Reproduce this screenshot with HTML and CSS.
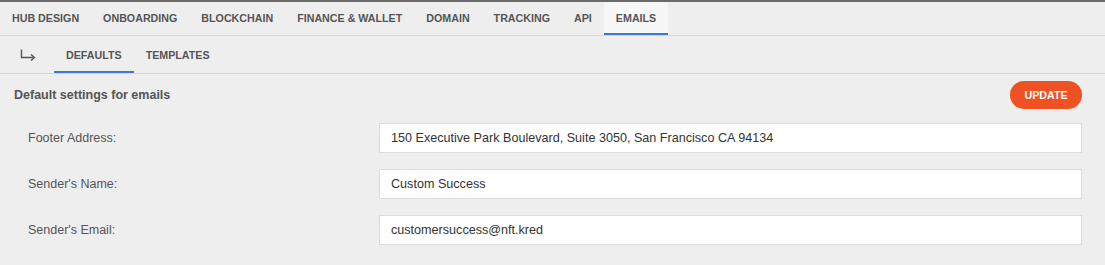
FILE: index.html
```html
<!DOCTYPE html>
<html lang="en">
<head>
  <meta charset="UTF-8" />
  <title>Emails - Defaults</title>
  <link rel="stylesheet" href="styles.css">
</head>
<body>

  <nav class="tabs">
    <a href="#">Hub Design</a>
    <a href="#">Onboarding</a>
    <a href="#">Blockchain</a>
    <a href="#">Finance &amp; Wallet</a>
    <a href="#">Domain</a>
    <a href="#">Tracking</a>
    <a href="#">API</a>
    <a href="#" class="active">Emails</a>
  </nav>

  <nav class="subtabs">
    <span class="sub-icon">
      <svg width="16" height="12" viewBox="0 0 16 12">
        <path d="M1.5 0.5V8.5H13" fill="none" stroke="#555" stroke-width="1.4"/>
        <path d="M11 5.5L14.5 8.5L11 11.5" fill="none" stroke="#555" stroke-width="1.4"/>
      </svg>
    </span>
    <a href="#" class="active">Defaults</a>
    <a href="#">Templates</a>
  </nav>

  <main>
    <div class="section-head">
      <h2>Default settings for emails</h2>
      <button>Update</button>
    </div>

    <div class="form-row">
      <label for="footerAddress">Footer Address:</label>
      <input id="footerAddress" type="text" value="150 Executive Park Boulevard, Suite 3050, San Francisco CA 94134">
    </div>
    <div class="form-row">
      <label for="senderName">Sender's Name:</label>
      <input id="senderName" type="text" value="Custom Success">
    </div>
    <div class="form-row">
      <label for="senderEmail">Sender's Email:</label>
      <input id="senderEmail" type="text" value="customersuccess@nft.kred">
    </div>
  </main>

</body>
</html>
```

FILE: styles.css
```css
* { box-sizing: border-box; margin: 0; padding: 0; font-family: "Liberation Sans", Arial, sans-serif; }
body { background-color: #eeeeee; color: #555; border-top: 2px solid #6a6a6a; }

.tabs {
  display: flex;
  height: 34px;
  border-bottom: 1px solid #d6d6d6;
}
.tabs a {
  display: flex;
  align-items: center;
  padding: 0 12px;
  font-size: 10.7px;
  font-weight: bold;
  text-transform: uppercase;
  color: #555;
  text-decoration: none;
  border-bottom: 2px solid transparent;
}
.tabs a.active {
  background-color: #f7f7f7;
  border-bottom-color: #3b78d8;
}

.subtabs {
  display: flex;
  height: 38px;
  border-bottom: 1px solid #d6d6d6;
}
.sub-icon {
  width: 54px;
  padding: 11px 0 0 20px;
}
.subtabs a {
  display: flex;
  align-items: center;
  padding: 2px 12px 0;
  font-size: 10.7px;
  font-weight: bold;
  text-transform: uppercase;
  color: #555;
  text-decoration: none;
  border-bottom: 2px solid transparent;
}
.subtabs a.active {
  border-bottom-color: #3b78d8;
}

main {
  padding: 7px 23px 0 14px;
}
.section-head {
  display: flex;
  justify-content: space-between;
  align-items: center;
  margin-bottom: 14px;
}
.section-head h2 {
  font-size: 12.5px;
  font-weight: bold;
  color: #555;
}
button {
  width: 72px;
  height: 28px;
  background-color: #ef5123;
  color: white;
  border: none;
  border-radius: 14px;
  font-size: 10.7px;
  font-weight: bold;
  text-transform: uppercase;
  cursor: pointer;
}

.form-row {
  display: grid;
  grid-template-columns: 365px 1fr;
  align-items: center;
  margin-bottom: 16px;
}
.form-row label {
  padding-left: 14px;
  font-size: 12.5px;
  color: #555;
}
.form-row input {
  height: 30px;
  padding: 0 11px;
  font-size: 12.6px;
  color: #333;
  background-color: white;
  border: 1px solid #dcdcdc;
  outline: none;
}
```
